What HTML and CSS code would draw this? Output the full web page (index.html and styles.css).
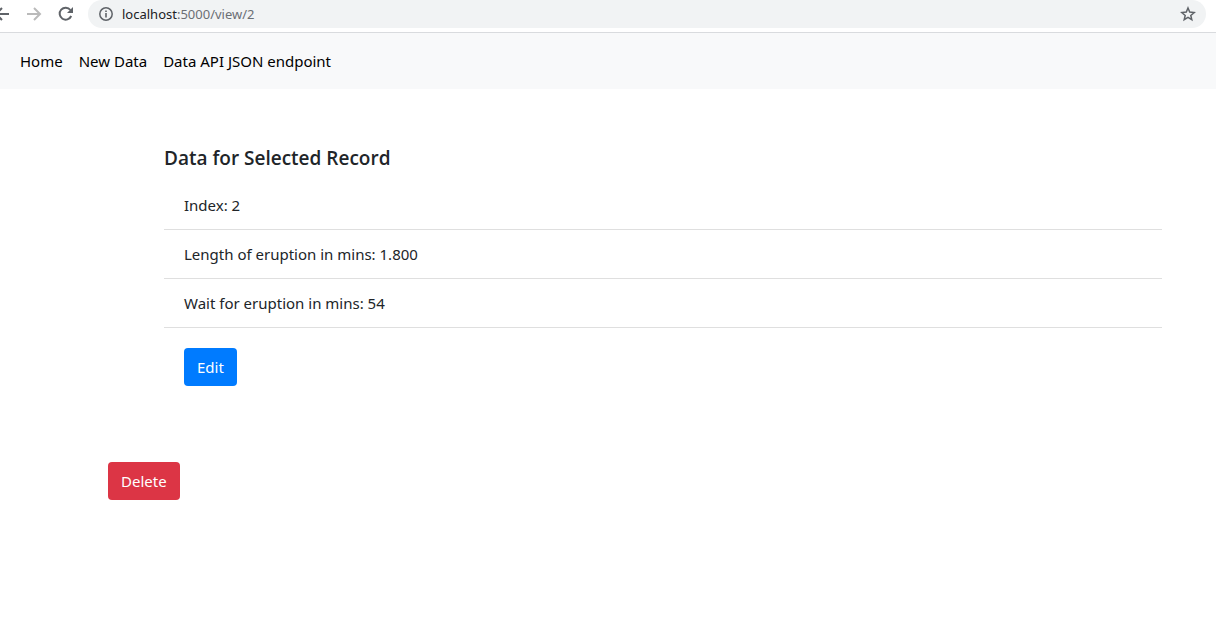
FILE: index.html
```html
<!DOCTYPE html>
<html lang="en">
<head>
<meta charset="utf-8">
<title>Selected Record</title>
<link rel="stylesheet" href="styles.css">
</head>
<body>
<header class="browser-bar">
  <button class="tool tool-back" type="button" aria-label="Back">
    <svg width="16" height="16" viewBox="0 0 16 16" fill="none" stroke="#5f6368" stroke-width="2"><path d="M15 8H2M8 2L2 8l6 6"/></svg>
  </button>
  <button class="tool" type="button" aria-label="Forward" disabled>
    <svg width="16" height="16" viewBox="0 0 16 16" fill="none" stroke="#bababa" stroke-width="2"><path d="M1 8h13M8 2l6 6-6 6"/></svg>
  </button>
  <button class="tool" type="button" aria-label="Reload">
    <svg width="16" height="16" viewBox="0 0 16 16"><path d="M13.2 10A6 6 0 1 1 12.4 4" fill="none" stroke="#5f6368" stroke-width="2"/><path d="M15 1v6H9z" fill="#5f6368"/></svg>
  </button>
  <div class="address">
    <svg width="14" height="14" viewBox="0 0 14 14" fill="none" stroke="#5f6368"><circle cx="7" cy="7" r="6.2" stroke-width="1.5"/><path d="M7 6v4.5M7 3.5v1.6" stroke-width="1.6"/></svg>
    <span class="url"><span class="host">localhost</span>:5000/view/2</span>
    <button class="tool star" type="button" aria-label="Bookmark">
      <svg width="16" height="16" viewBox="0 0 16 16" fill="none" stroke="#5f6368" stroke-width="1.5"><path d="M8 2l1.7 4.1 4.5.4-3.4 2.9 1 4.3L8 11.400l-3.800 2.300 1-4.300L1.800 6.500l4.500-.4z"/></svg>
    </button>
  </div>
</header>
<nav class="navbar">
  <a href="#">Home</a>
  <a href="#">New Data</a>
  <a href="#">Data API JSON endpoint</a>
</nav>
<main class="content">
  <section class="card">
    <h1 class="title">Data for Selected Record</h1>
    <ul class="list">
      <li>Index: 2</li>
      <li>Length of eruption in mins: 1.800</li>
      <li>Wait for eruption in mins: 54</li>
    </ul>
    <div class="card-body"><a class="btn btn-edit" href="#">Edit</a></div>
  </section>
  <form class="delete-form"><button class="btn btn-delete" type="button">Delete</button></form>
</main>
</body>
</html>
```
FILE: styles.css
```css
* { box-sizing: border-box; }
body {
  margin: 0;
  background: #fff;
  color: #212529;
  font: 15px/24px "Noto Sans", "Open Sans", sans-serif;
}
.browser-bar {
  display: flex;
  align-items: flex-start;
  height: 33px;
  padding-right: 10px;
  border-bottom: 1px solid #d9dbde;
}
.tool {
  display: flex;
  align-items: center;
  justify-content: center;
  flex: none;
  width: 32px;
  height: 28px;
  padding: 0;
  border: 0;
  background: none;
}
.tool-back { margin-left: -14px; }
.address {
  display: flex;
  flex: 1;
  align-items: center;
  height: 28px;
  margin-left: 6px;
  padding: 0 2px 0 11px;
  border-radius: 14px;
  background: #f1f3f4;
}
.url {
  flex: 1;
  margin-left: 9px;
  color: #6b6f74;
  font-size: 13px;
}
.host { color: #202124; }
.navbar {
  display: flex;
  gap: 16px;
  padding: 16px 20px;
  background: #f8f9fa;
}
.navbar a { color: #000; text-decoration: none; }
.content { padding: 57px 54px 0 108px; }
.card { padding-left: 56px; }
.title {
  margin: 0 0 11px;
  font-family: "Open Sans", "Noto Sans", sans-serif;
  font-size: 19px;
  font-weight: 600;
  line-height: 24px;
}
.list { margin: 0; padding: 0; list-style: none; }
.list li { padding: 12px 20px; border-bottom: 1px solid #dfdfdf; }
.card-body { padding: 20px; }
.btn {
  display: inline-block;
  padding: 7px 13px;
  border: 0;
  border-radius: 4px;
  color: #fff;
  font: inherit;
  text-decoration: none;
}
.btn-edit { background: #007bff; }
.btn-delete { background: #dc3545; }
.delete-form { margin-top: 56px; }
```
